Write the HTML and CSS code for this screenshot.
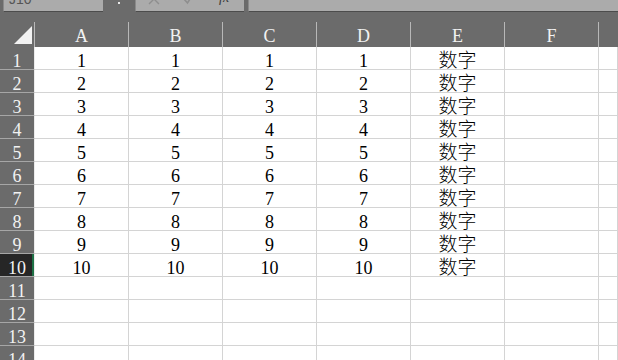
FILE: index.html
```html
<!DOCTYPE html>
<html lang="zh">
<head>
<meta charset="utf-8">
<title>Sheet</title>
<link rel="stylesheet" href="styles.css">
</head>
<body>
<div class="toolbar">
  <div class="namebox"><span class="nametext">J10</span></div>
  <div class="sep"><span class="dot"></span></div>
  <div class="fnbox">
    <svg class="ic-x" width="12" height="12" viewBox="0 0 12 12"><path d="M1 1 L11 11 M11 1 L1 11" stroke="#8e8e8e" stroke-width="1.4" fill="none"/></svg>
    <svg class="ic-ok" width="11" height="12" viewBox="0 0 11 12"><path d="M1 6 L4.5 10 L10 1" stroke="#8e8e8e" stroke-width="1.6" fill="none"/></svg>
    <span class="fx">fx</span>
  </div>
  <div class="formula"></div>
</div>
<div class="sheet">
  <div class="corner"><svg width="34" height="25" viewBox="0 0 34 25"><polygon points="14,22 32,4 32,22" fill="#f2f2f2"/></svg></div>
  <div class="ch">A</div><div class="ch">B</div><div class="ch">C</div><div class="ch">D</div><div class="ch">E</div><div class="ch">F</div><div class="ch ch-last"></div>

  <div class="rh">1</div><div class="c">1</div><div class="c">1</div><div class="c">1</div><div class="c">1</div><div class="c cjk">数字</div><div class="c"></div><div class="c"></div>
  <div class="rh">2</div><div class="c">2</div><div class="c">2</div><div class="c">2</div><div class="c">2</div><div class="c cjk">数字</div><div class="c"></div><div class="c"></div>
  <div class="rh">3</div><div class="c">3</div><div class="c">3</div><div class="c">3</div><div class="c">3</div><div class="c cjk">数字</div><div class="c"></div><div class="c"></div>
  <div class="rh">4</div><div class="c">4</div><div class="c">4</div><div class="c">4</div><div class="c">4</div><div class="c cjk">数字</div><div class="c"></div><div class="c"></div>
  <div class="rh">5</div><div class="c">5</div><div class="c">5</div><div class="c">5</div><div class="c">5</div><div class="c cjk">数字</div><div class="c"></div><div class="c"></div>
  <div class="rh">6</div><div class="c">6</div><div class="c">6</div><div class="c">6</div><div class="c">6</div><div class="c cjk">数字</div><div class="c"></div><div class="c"></div>
  <div class="rh">7</div><div class="c">7</div><div class="c">7</div><div class="c">7</div><div class="c">7</div><div class="c cjk">数字</div><div class="c"></div><div class="c"></div>
  <div class="rh">8</div><div class="c">8</div><div class="c">8</div><div class="c">8</div><div class="c">8</div><div class="c cjk">数字</div><div class="c"></div><div class="c"></div>
  <div class="rh">9</div><div class="c">9</div><div class="c">9</div><div class="c">9</div><div class="c">9</div><div class="c cjk">数字</div><div class="c"></div><div class="c"></div>
  <div class="rh rh-sel">10</div><div class="c">10</div><div class="c">10</div><div class="c">10</div><div class="c">10</div><div class="c cjk">数字</div><div class="c"></div><div class="c"></div>
  <div class="rh">11</div><div class="c"></div><div class="c"></div><div class="c"></div><div class="c"></div><div class="c"></div><div class="c"></div><div class="c"></div>
  <div class="rh">12</div><div class="c"></div><div class="c"></div><div class="c"></div><div class="c"></div><div class="c"></div><div class="c"></div><div class="c"></div>
  <div class="rh">13</div><div class="c"></div><div class="c"></div><div class="c"></div><div class="c"></div><div class="c"></div><div class="c"></div><div class="c"></div>
  <div class="rh">14</div><div class="c"></div><div class="c"></div><div class="c"></div><div class="c"></div><div class="c"></div><div class="c"></div><div class="c"></div>
</div>
</body>
</html>
```

FILE: styles.css
```css
html, body {
  margin: 0;
  padding: 0;
  background: #ffffff;
}
body {
  width: 618px;
  height: 360px;
  overflow: hidden;
  font-family: "Liberation Serif", "Noto Sans CJK SC", serif;
}
.toolbar {
  height: 22px;
  background: #6b6b6b;
  display: flex;
  align-items: flex-start;
}
.namebox, .fnbox, .formula {
  box-sizing: border-box;
  height: 12px;
  background: #ababab;
  border-bottom: 1px solid #4c4c4c;
  overflow: hidden;
}
.namebox {
  margin-left: 3px;
  width: 100px;
  border-left: 1px solid #8a8a8a;
}
.nametext {
  display: block;
  margin-top: -9px;
  padding-left: 5px;
  font-family: "Liberation Sans", sans-serif;
  font-size: 14px;
  line-height: 16px;
  color: #555555;
}
.sep {
  width: 32px;
  display: flex;
  justify-content: center;
}
.dot {
  width: 2px;
  height: 2px;
  margin-top: 2px;
  background: #e8e8e8;
}
.fnbox {
  width: 109px;
  display: flex;
  align-items: flex-start;
  border-left: 1px solid #8a8a8a;
}
.ic-x {
  margin-left: 12px;
  margin-top: -7px;
}
.ic-ok {
  margin-left: 23px;
  margin-top: -7px;
}
.fx {
  margin-left: 25px;
  margin-top: -10px;
  font-family: "Liberation Serif", serif;
  font-style: italic;
  font-size: 14px;
  line-height: 16px;
  color: #3a3a3a;
}
.formula {
  flex: 1;
  margin-left: 4px;
  border-left: 1px solid #8a8a8a;
}
.sheet {
  display: grid;
  grid-template-columns: 35px repeat(6, 94px) 1fr;
  grid-template-rows: 25px repeat(14, 23px);
}
.sheet > div {
  box-sizing: border-box;
  text-align: center;
  white-space: nowrap;
}
.corner {
  background: #6b6b6b;
  border-right: 1px solid #b8b8b8;
}
.corner svg {
  display: block;
}
.ch {
  background: #6b6b6b;
  color: #f2f2f2;
  font-size: 18px;
  line-height: 15px;
  padding-top: 7px;
  border-right: 1px solid #b8b8b8;
}
.ch-last {
  border-right: none;
}
.rh {
  background: #6b6b6b;
  color: #f2f2f2;
  font-size: 18px;
  line-height: 16px;
  padding-top: 6px;
  border-right: 1px solid #ececec;
  border-bottom: 1px solid #a6a6a6;
}
.rh-sel {
  background: #262626;
  box-shadow: inset -2px 0 0 #1e7145;
}
.c {
  color: #000000;
  font-size: 18px;
  line-height: 16px;
  padding-top: 6px;
  border-right: 1px solid #d4d4d4;
  border-bottom: 1px solid #d4d4d4;
}
.cjk {
  font-size: 19px;
  font-weight: 300;
}
```
